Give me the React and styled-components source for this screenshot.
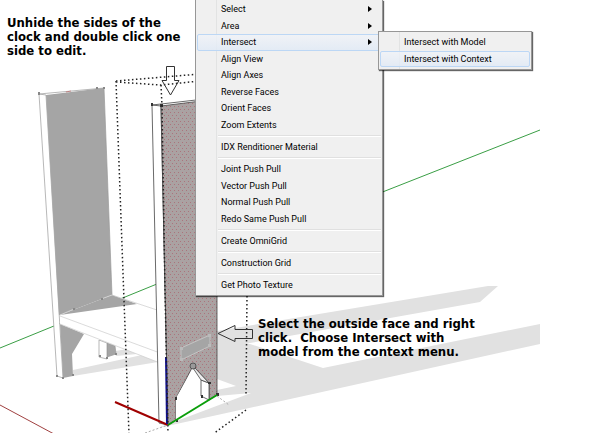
import React from "react";
import styled, { createGlobalStyle } from "styled-components";

const menuGroups = [
	[
		{ label: "Select", submenu: true },
		{ label: "Area", submenu: true },
		{ label: "Intersect", submenu: true, active: true },
		{ label: "Align View" },
		{ label: "Align Axes" },
		{ label: "Reverse Faces" },
		{ label: "Orient Faces" },
		{ label: "Zoom Extents" }
	],
	[{ label: "IDX Renditioner Material" }],
	[
		{ label: "Joint Push Pull" },
		{ label: "Vector Push Pull" },
		{ label: "Normal Push Pull" },
		{ label: "Redo Same Push Pull" }
	],
	[{ label: "Create OmniGrid" }],
	[{ label: "Construction Grid" }],
	[{ label: "Get Photo Texture" }]
];

const submenuItems = [
	{ label: "Intersect with Model" },
	{ label: "Intersect with Context", active: true }
];

const Shadows = () => (
	<g fill="#e1e1e1">
		<path d="M217 331L488 286L498 286L480 302L250 343L217 352Z" />
		<path d="M217 340L250 344L323 368L540 324V344L190 421L158 428L251 393L217 396V390L236 386L217 379Z" />
		<path d="M73 370L142 355L158 361V362L73 376Z" />
		<path d="M115 351L128 349L137 354L116 356Z" />
	</g>
);

const BackSide = () => (
	<g stroke="#999" strokeWidth="0.7">
		<path d="M39 94L46 95L63 378L57 376Z" fill="#fff" />
		<path d="M46 95L104 88L112 295L137 304L59 315Z" fill="#a5a5a5" stroke="none" />
		<path d="M39 94L104 88L112 295" fill="none" />
		<path d="M60 324L84 334L72 354L73 376L63 378Z" fill="#a5a5a5" stroke="none" />
		<path d="M107 343L115 346L116 354L107 357Z" fill="#a5a5a5" />
		<path d="M99 340L107 343V359L99 357Z" fill="#fff" />
		<path d="M60 315L112 295L160 311V363L60 324Z" fill="#fff" stroke="none" />
		<path d="M60 315L112 295L137 304Z" fill="#a5a5a5" stroke="none" />
		<path d="M112 295L160 311M60 316L160 353M60 324L160 363" fill="none" stroke="#ccc" />
		<path d="M60 315L74 309M101 299L112 295" fill="none" stroke="#ddd" />
		<g fill="#888" stroke="none">
			<rect x="38" y="92" width="2" height="3" />
			<rect x="96" y="87" width="2" height="2" />
			<rect x="103" y="87" width="2" height="2" />
			<rect x="73" y="308" width="2" height="2" />
			<rect x="101" y="298" width="2" height="2" />
			<rect x="56" y="375" width="2" height="2" />
			<rect x="62" y="377" width="2" height="2" />
			<rect x="72" y="374" width="2" height="2" />
			<rect x="99" y="355" width="2" height="2" />
			<rect x="106" y="357" width="2" height="2" />
			<rect x="115" y="353" width="2" height="2" />
		</g>
		<path d="M66 92L71 91" stroke="#b66" />
	</g>
);

const FrontSide = () => (
	<g stroke="#444" strokeWidth="0.8">
		<path d="M152 105L161 106L168 425L159 423Z" fill="#fff" />
		<path
			d="M161 106L217 99V395L209 400V383L193 366L176 398V420L168 425Z"
			fill="url(#selectedFace)"
		/>
		<path d="M152 105L161 104L196 100" fill="none" />
		<path d="M176 398L193 369L201 380V396L209 400L176 420Z" fill="#fff" stroke="none" />
		<path d="M201 380L209 383V400L201 396Z" fill="#fff" />
		<path d="M193 368L201 380L209 383L194 367Z" fill="#eee" />
		<path d="M181 348L210 335V346L181 360Z" fill="#a5a5a5" stroke="#ccc" />
		<circle cx="193" cy="366" r="3" fill="#999" />
		<g fill="#333" stroke="none">
			<rect x="151" y="103" width="2" height="3" />
			<rect x="160" y="104" width="3" height="3" />
			<rect x="175" y="397" width="2" height="3" />
			<rect x="176" y="419" width="2" height="3" />
			<rect x="208" y="382" width="3" height="2" />
			<rect x="201" y="395" width="2" height="3" />
			<rect x="216" y="393" width="3" height="3" />
		</g>
		<g fill="#bbb" stroke="none">
			<rect x="180" y="347" width="3" height="3" />
			<rect x="208" y="334" width="3" height="3" />
			<rect x="180" y="358" width="3" height="3" />
			<rect x="208" y="344" width="3" height="3" />
		</g>
	</g>
);

const ModelView = () => (
	<Drawing viewBox="0 0 600 433" role="img" aria-label="Clock case model">
		<defs>
			<pattern id="selectedFace" width="4" height="6" patternUnits="userSpaceOnUse">
				<rect width="4" height="6" fill="#aaa2a2" />
				<rect x="0" y="1" width="1" height="1" fill="#ab747c" />
				<rect x="2" y="4" width="1" height="1" fill="#ab747c" />
			</pattern>
		</defs>
		<Shadows />
		<path d="M0 348L380 193L540 130" fill="none" stroke="#3a9e45" />
		<BackSide />
		<path d="M0 405L54 434" stroke="#a04040" />
		<FrontSide />
		<g fill="none" strokeWidth="2">
			<path d="M115 402L168 425" stroke="#a00000" />
			<path d="M168 425L217 395" stroke="#0a9e0a" />
			<path d="M166 357L167 424" stroke="#10108a" />
		</g>
		<g fill="none" stroke="#222" strokeWidth="1.5" strokeDasharray="1.5 2.5">
			<path d="M116 81L200 74M116 82L161 85L200 81M116 81L124 300L129 434" />
			<path d="M161 85L162 106L165 290L168 434" />
			<path d="M247 296L246 395M246 410L213 434" />
		</g>
		<path
			d="M145 433L168 425M217 396L229 405"
			fill="none"
			stroke="#aaa"
			strokeDasharray="2 2"
		/>
		<g fill="none" stroke="#333">
			<path d="M166.500 66.500H174.500V80.500H179L170.500 95L162 80.500H166.500Z" />
			<path d="M218 333.500L235 325.500V329.500H252.500V338.500H235V341.500Z" />
		</g>
	</Drawing>
);

const Item = ({ label, submenu, active }) => (
	<MenuItem role="menuitem" $active={active} aria-haspopup={submenu ? "menu" : undefined}>
		{label}
		{submenu && (
			<SubmenuArrow viewBox="0 0 4 8" aria-hidden="true">
				<path d="M0 1L4 4L0 7Z" />
			</SubmenuArrow>
		)}
	</MenuItem>
);

const App = () => (
	<Page>
		<GlobalStyle />
		<ModelView />
		<Note $x={7} $y={16}>
			Unhide the sides of the
			<br />
			clock and double click one
			<br />
			side to edit.
		</Note>
		<Note $x={258} $y={317}>
			Select the outside face and right
			<br />
			click.&nbsp; Choose Intersect with
			<br />
			model from the context menu.
		</Note>
		<ContextMenu role="menu" aria-label="Face">
			{menuGroups.map((items, i) => (
				<React.Fragment key={items[0].label}>
					{i > 0 && <Separator />}
					<MenuGroup $rows={items.length}>
						{items.map(item => <Item key={item.label} {...item} />)}
					</MenuGroup>
				</React.Fragment>
			))}
		</ContextMenu>
		<Submenu role="menu" aria-label="Intersect">
			<MenuGroup $rows={submenuItems.length}>
				{submenuItems.map(item => <Item key={item.label} {...item} />)}
			</MenuGroup>
		</Submenu>
	</Page>
);

const GlobalStyle = createGlobalStyle`
	body {
		background: #fff;
		margin: 0;
	}
`;

const Page = styled.main`
	min-height: 100vh;
	overflow: hidden;
	position: relative;
`;

const Drawing = styled.svg`
	display: block;
	width: 600px;
`;

const Note = styled.p`
	color: #000;
	font: bold 13px/14px "DejaVu Sans Condensed", "DejaVu Sans", sans-serif;
	left: ${props => props.$x}px;
	margin: 0;
	position: absolute;
	top: ${props => props.$y}px;
	white-space: nowrap;
`;

const Menu = styled.div`
	background: linear-gradient(
		90deg,
		#f0f0f0 20px,
		#e2e3e3 20px,
		#e2e3e3 21px,
		#f0f0f0 21px
	);
	border: 1px solid #979797;
	box-shadow: 1px 1px 1px rgba(0, 0, 0, 0.6);
	box-sizing: border-box;
	position: absolute;
`;

const ContextMenu = styled(Menu)`
	border-top: none;
	left: 195px;
	padding: 1px 1px 2px;
	top: 0;
	width: 188px;
`;

const Submenu = styled(Menu)`
	left: 378px;
	padding: 2px 1px;
	top: 31px;
	width: 154px;
`;

/* rows share the group's height, two of them to every 33px */
const MenuGroup = styled.div`
	display: grid;
	grid-auto-rows: 1fr;
	height: ${props => Math.floor(props.$rows * 33 / 2)}px;
`;

const MenuItem = styled.button`
	align-items: center;
	background: ${props =>
		props.$active ? "linear-gradient(#f0f3f8cc, #e0eaf6cc)" : "none"};
	border: 1px solid ${props => (props.$active ? "#bcd7f5" : "transparent")};
	border-radius: 2px;
	color: #000;
	display: flex;
	font: 9px/14px Roboto, sans-serif;
	justify-content: space-between;
	min-height: 0;
	padding: 0 8px 0 23px;
	text-align: left;
	white-space: nowrap;
`;

const SubmenuArrow = styled.svg`
	fill: #000;
	height: 8px;
	width: 4px;
`;

const Separator = styled.hr`
	background: #e0e0e0;
	border: none;
	border-bottom: 1px solid #fff;
	height: 1px;
	margin: 2px 0 2px 21px;
`;

export default App;
